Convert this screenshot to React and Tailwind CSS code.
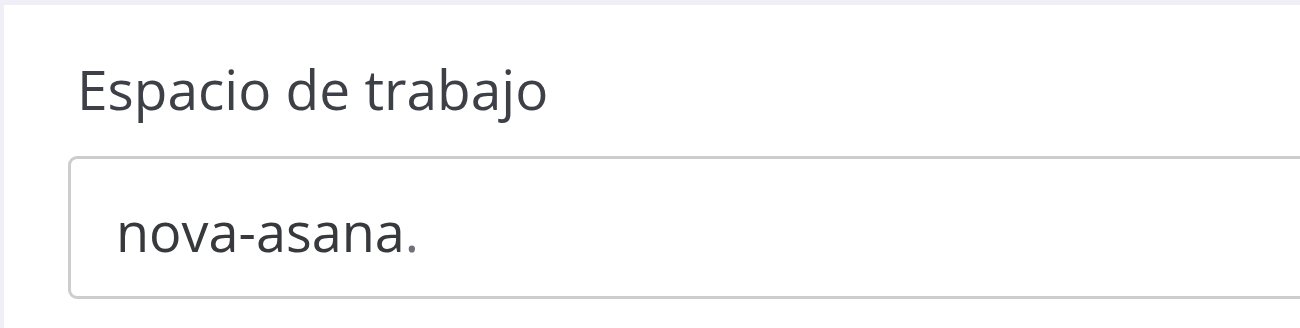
import React from 'react';

export default function App() {
  return (
    <div className="w-[1300px] h-[328px] bg-[#f0eff8] pt-[5px] pl-[4px] overflow-hidden">
      <div className="h-full bg-white pl-[64px] pt-[56px] font-['Open_Sans',_sans-serif]">
        <label className="block pl-[9px] text-[55px] leading-none text-[#3d4047]">
          Espacio de trabajo
        </label>
        <div className="mt-[40px] w-[1400px] h-[143px] border-[3px] border-[#cdcdcd] rounded-[9px] flex items-center pl-[45px]">
          <span className="text-[54px] leading-none text-[#37393d] pt-[7px]">
            nova-asana<span className="text-[#6f7176]">.</span>
          </span>
        </div>
      </div>
    </div>
  );
}
